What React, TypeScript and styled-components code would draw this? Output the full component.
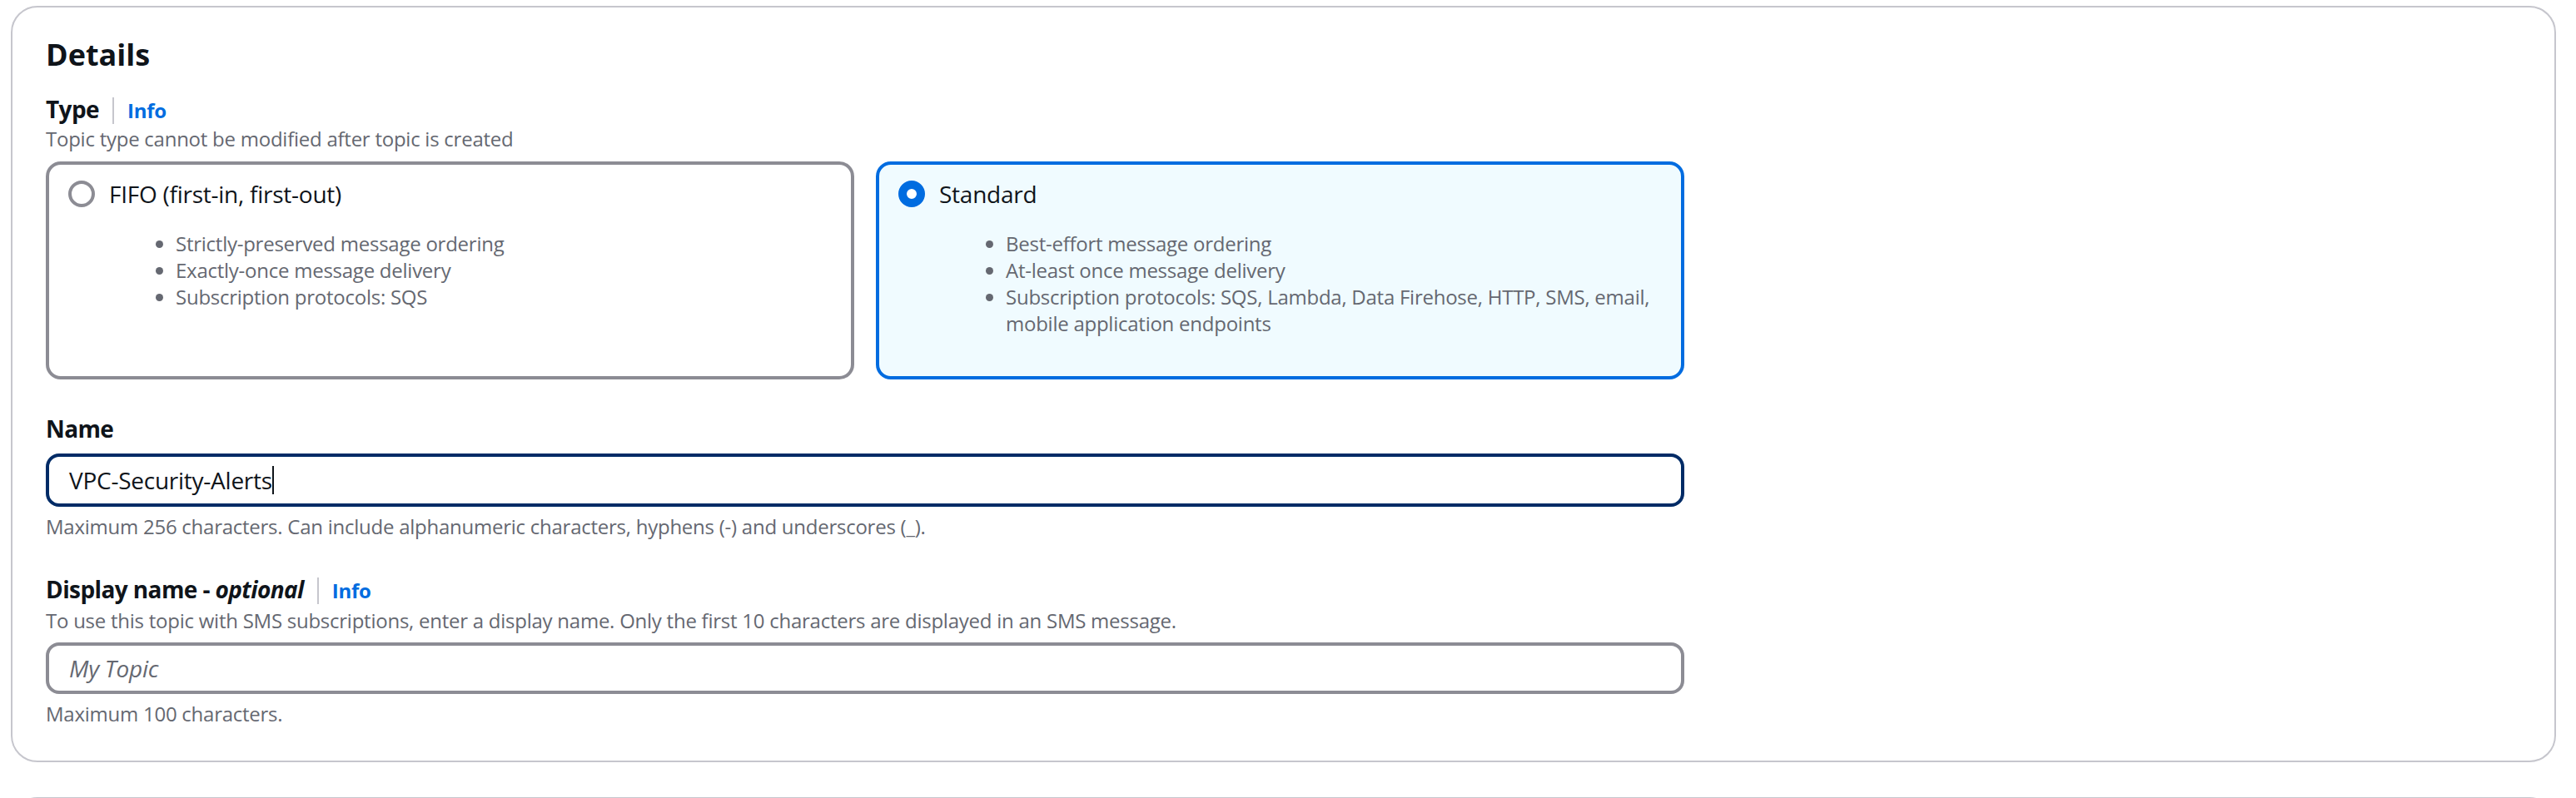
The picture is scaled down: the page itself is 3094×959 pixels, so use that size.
import * as React from "react";
import styled, { createGlobalStyle } from "styled-components";

const GlobalStyle = createGlobalStyle`
    * {
        box-sizing: border-box;
    }
    html,
    body {
        margin: 0;
        padding: 0;
        background: #ffffff;
    }
    body {
        font-family: "Open Sans", "Noto Sans", Arial, sans-serif;
        letter-spacing: -0.25px;
        color: #0f141a;
    }
`;

const Page = styled.div`
    height: 959px;
    overflow: hidden;
    padding: 7px 24px 0 13px;
`;

const Container = styled.section`
    border: 2px solid #c6c6cd;
    border-radius: 32px;
    padding: 35px 40px 40px;
    background: #ffffff;
`;

const NextContainer = styled.section`
    margin-top: 42px;
    height: 120px;
    border: 2px solid #c6c6cd;
    border-radius: 32px;
`;

const Heading = styled.h2`
    margin: 0 0 23px;
    font-size: 36px;
    line-height: 44px;
    font-weight: 700;
    letter-spacing: 0;
    color: #0f141a;
`;

const Form = styled.div`
    max-width: 1968px;
    display: flex;
    flex-direction: column;
    gap: 39px;
`;

const Field = styled.div`
    display: flex;
    flex-direction: column;
`;

const LabelRow = styled.div`
    display: flex;
    align-items: center;
    height: 40px;
`;

const Label = styled.label`
    font-size: 28px;
    line-height: 40px;
    font-weight: 700;
    letter-spacing: -0.6px;
    color: #0f141a;

    em {
        font-style: italic;
    }
`;

const Divider = styled.span`
    width: 2px;
    height: 32px;
    margin: 4px 16px 0 16px;
    background: #c6c6cd;
`;

const InfoLink = styled.a`
    margin-top: 4px;
    font-size: 24px;
    line-height: 32px;
    font-weight: 700;
    color: #006ce0;
    text-decoration: none;
    cursor: pointer;
`;

const Hint = styled.div<{ $gap?: number }>`
    margin-top: ${(props) => props.$gap ?? 0}px;
    font-size: 24px;
    line-height: 32px;
    color: #656871;
`;

const Tiles = styled.div`
    margin-top: 11px;
    display: grid;
    grid-template-columns: 1fr 1fr;
    gap: 26px;
`;

const Tile = styled.div<{ $selected: boolean }>`
    border: 4px solid ${(props) => (props.$selected ? "#006ce0" : "#8c8c94")};
    border-radius: 18px;
    background: ${(props) => (props.$selected ? "#f0fbff" : "#ffffff")};
    padding: 15px 23px 23px;
    cursor: pointer;
`;

const TileHeader = styled.div`
    display: flex;
    align-items: center;
    gap: 17px;
`;

const Radio = styled.span<{ $checked: boolean }>`
    flex: none;
    width: 32px;
    height: 32px;
    border-radius: 50%;
    background: #ffffff;
    border: ${(props) =>
        props.$checked ? "10px solid #006ce0" : "4px solid #8c8c94"};
`;

const TileTitle = styled.span`
    font-size: 28px;
    line-height: 40px;
    color: #0f141a;
`;

const Features = styled.ul`
    margin: 24px 0 24px 49px;
    padding-left: 80px;
    font-size: 24px;
    line-height: 32px;
    color: #656871;
`;

const InputShell = styled.div<{ $focused?: boolean }>`
    margin-top: 10px;
    height: 64px;
    display: flex;
    align-items: center;
    padding: 0 24px;
    border: 4px solid ${(props) => (props.$focused ? "#002b66" : "#8c8c94")};
    border-radius: 16px;
    background: #ffffff;
    font-size: 28px;
    color: #0f141a;
`;

const Caret = styled.span`
    width: 2px;
    height: 34px;
    background: #0f141a;
`;

const TextInput = styled.input`
    margin-top: 10px;
    height: 62px;
    width: 100%;
    padding: 0 24px;
    border: 4px solid #8c8c94;
    border-radius: 16px;
    background: #ffffff;
    font-family: inherit;
    font-size: 28px;
    letter-spacing: inherit;
    color: #0f141a;
    outline: none;

    &::placeholder {
        font-style: italic;
        color: #656871;
    }
`;

interface TopicType {
    id: string;
    title: string;
    features: string[];
}

const topicTypes: TopicType[] = [
    {
        id: "fifo",
        title: "FIFO (first-in, first-out)",
        features: [
            "Strictly-preserved message ordering",
            "Exactly-once message delivery",
            "Subscription protocols: SQS",
        ],
    },
    {
        id: "standard",
        title: "Standard",
        features: [
            "Best-effort message ordering",
            "At-least once message delivery",
            "Subscription protocols: SQS, Lambda, Data Firehose, HTTP, SMS, email, mobile application endpoints",
        ],
    },
];

const App: React.FC = () => {
    const [type, setType] = React.useState("standard");

    return (
        <>
            <GlobalStyle />
            <Page>
                <Container>
                    <Heading>Details</Heading>
                    <Form>
                        <Field>
                            <LabelRow>
                                <Label>Type</Label>
                                <Divider />
                                <InfoLink>Info</InfoLink>
                            </LabelRow>
                            <Hint>Topic type cannot be modified after topic is created</Hint>
                            <Tiles>
                                {topicTypes.map((t) => (
                                    <Tile
                                        key={t.id}
                                        $selected={type === t.id}
                                        onClick={() => setType(t.id)}
                                    >
                                        <TileHeader>
                                            <Radio $checked={type === t.id} />
                                            <TileTitle>{t.title}</TileTitle>
                                        </TileHeader>
                                        <Features>
                                            {t.features.map((f) => (
                                                <li key={f}>{f}</li>
                                            ))}
                                        </Features>
                                    </Tile>
                                ))}
                            </Tiles>
                        </Field>

                        <Field>
                            <LabelRow>
                                <Label>Name</Label>
                            </LabelRow>
                            <InputShell $focused>
                                VPC-Security-Alerts
                                <Caret />
                            </InputShell>
                            <Hint $gap={8}>
                                Maximum 256 characters. Can include alphanumeric characters,
                                hyphens (-) and underscores (_).
                            </Hint>
                        </Field>

                        <Field>
                            <LabelRow>
                                <Label>
                                    Display name - <em>optional</em>
                                </Label>
                                <Divider />
                                <InfoLink>Info</InfoLink>
                            </LabelRow>
                            <Hint $gap={2}>
                                To use this topic with SMS subscriptions, enter a display name.
                                Only the first 10 characters are displayed in an SMS message.
                            </Hint>
                            <TextInput placeholder="My Topic" />
                            <Hint $gap={8}>Maximum 100 characters.</Hint>
                        </Field>
                    </Form>
                </Container>
                <NextContainer />
            </Page>
        </>
    );
};

export default App;
